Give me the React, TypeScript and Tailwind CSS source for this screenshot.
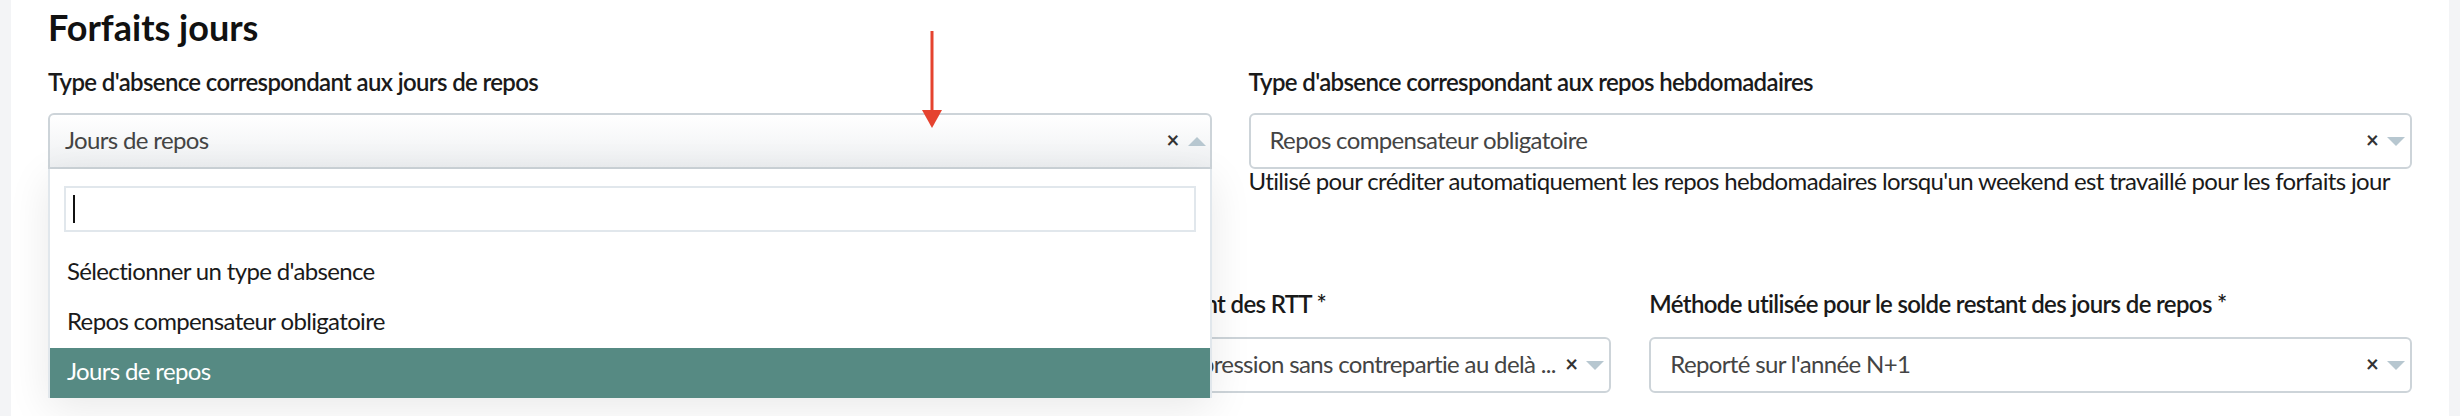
import React from 'react'

const font = { fontFamily: 'Lato, "Noto Sans", sans-serif' }

function Caret({ up }: { up?: boolean }) {
  return (
    <svg width="18" height="9" viewBox="0 0 18 9" className="shrink-0">
      {up ? <polygon points="0,9 18,9 9,0" fill="#b7c7d0" /> : <polygon points="0,0 18,0 9,9" fill="#b7c7d0" />}
    </svg>
  )
}

function Clear() {
  return <span className="text-[22px] font-bold text-[#333] leading-none mr-[9px] -mt-[3px] shrink-0">×</span>
}

function Select({ value }: { value: string }) {
  return (
    <div className="h-[56px] border-2 border-[#cdd4d9] rounded-[6px] bg-white flex items-center pl-[19px] pr-[5px]">
      <span className="text-[24px] text-[#444] flex-1 min-w-0 whitespace-nowrap overflow-hidden pb-[2px]">{value}</span>
      <Clear />
      <Caret />
    </div>
  )
}

function Label({ children }: { children: React.ReactNode }) {
  return <div className="text-[24px] leading-[30px] font-semibold text-[#1a1a1a] whitespace-nowrap">{children}</div>
}

export default function App() {
  return (
    <div className="bg-[#f3f4f6] px-[11px] h-[416px] overflow-hidden tracking-[-0.65px]" style={font}>
      <div className="bg-white h-full px-[37px] pt-[3px] relative">
        <h1 className="text-[36px] leading-[48px] font-bold text-[#111] tracking-normal">Forfaits jours</h1>

        <div className="grid grid-cols-2 gap-x-[37px] mt-[16px]">
          <div>
            <Label>Type d'absence correspondant aux jours de repos</Label>
            <div className="relative mt-[16px] z-10">
              <div className="h-[56px] border-2 border-[#cdd4d9] rounded-t-[6px] bg-linear-to-b from-white to-[#eef0f2] flex items-center pl-[15px] pr-[4px]">
                <span className="text-[24px] text-[#444] flex-1 pb-[2px]">Jours de repos</span>
                <Clear />
                <Caret up />
              </div>
              <div className="absolute left-0 right-0 top-full bg-white border-x-2 border-[#e1e7ec] shadow-[0_10px_40px_rgba(0,0,0,0.09)]">
                <div className="pt-[17px] pb-[16px] px-[14px]">
                  <div className="h-[46px] border-2 border-[#e1e7ec] flex items-center pl-[7px]">
                    <div className="w-[2px] h-[28px] bg-[#111]" />
                  </div>
                </div>
                <div className="text-[24px] text-[#1a1a1a]">
                  <div className="h-[50px] flex items-center px-[17px] pb-[4px]">Sélectionner un type d'absence</div>
                  <div className="h-[50px] flex items-center px-[17px] pb-[4px]">Repos compensateur obligatoire</div>
                  <div className="h-[50px] flex items-center px-[17px] pb-[4px] bg-[#568a83] text-white">Jours de repos</div>
                </div>
              </div>
            </div>
          </div>
          <div>
            <Label>Type d'absence correspondant aux repos hebdomadaires</Label>
            <div className="mt-[16px]">
              <Select value="Repos compensateur obligatoire" />
            </div>
            <p className="text-[24px] leading-[24px] text-[#1a1a1a] whitespace-nowrap">
              Utilisé pour créditer automatiquement les repos hebdomadaires lorsqu'un weekend est travaillé pour les forfaits jour
            </p>
          </div>
        </div>

        <div className="grid grid-cols-3 gap-x-[38px] mt-[96px]">
          <div className="invisible">
            <Label>Période de référence *</Label>
            <div className="mt-[18px]">
              <Select value="Année civile" />
            </div>
          </div>
          <div>
            <Label>Méthode utilisée pour le solde restant des RTT *</Label>
            <div className="mt-[18px]">
              <Select value="Reporté sur l'année N+1, puis suppression sans contrepartie au delà ..." />
            </div>
          </div>
          <div>
            <Label>Méthode utilisée pour le solde restant des jours de repos *</Label>
            <div className="mt-[18px]">
              <Select value="Reporté sur l'année N+1" />
            </div>
          </div>
        </div>

        <svg className="absolute left-[910px] top-[31px] z-20" width="22" height="98" viewBox="0 0 22 98">
          <line x1="11" y1="0" x2="11" y2="82" stroke="#e5432f" strokeWidth="3" />
          <polygon points="1,79 21,79 11,97" fill="#e5432f" />
        </svg>
      </div>
    </div>
  )
}
